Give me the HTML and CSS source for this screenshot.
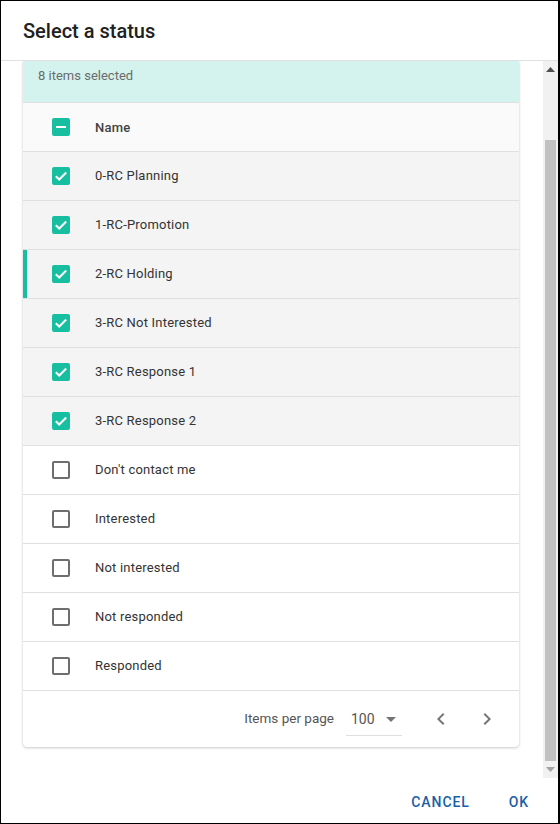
FILE: index.html
```html
<!DOCTYPE html>
<html>
<head>
<meta charset="utf-8">
<link rel="stylesheet" href="styles.css">
</head>
<body>
<div class="dialog">
  <div class="title">Select a status</div>
  <div class="content">
    <div class="scroll-area">
      <div class="card">
        <div class="banner">8 items selected</div>
        <div class="row head">
          <span class="cb on"><svg width="18" height="18" viewBox="0 0 18 18"><rect x="4" y="8" width="10" height="2" fill="#fff"/></svg></span>
          <span class="label">Name</span>
        </div>
        <div class="row sel"><span class="cb on"><svg width="18" height="18" viewBox="0 0 18 18"><path d="M3.8 9.2l3.4 3.3 7-7" fill="none" stroke="#fff" stroke-width="2"/></svg></span><span class="label">0-RC Planning</span></div>
        <div class="row sel"><span class="cb on"><svg width="18" height="18" viewBox="0 0 18 18"><path d="M3.8 9.2l3.4 3.3 7-7" fill="none" stroke="#fff" stroke-width="2"/></svg></span><span class="label">1-RC-Promotion</span></div>
        <div class="row sel active"><span class="cb on"><svg width="18" height="18" viewBox="0 0 18 18"><path d="M3.8 9.2l3.4 3.3 7-7" fill="none" stroke="#fff" stroke-width="2"/></svg></span><span class="label">2-RC Holding</span></div>
        <div class="row sel"><span class="cb on"><svg width="18" height="18" viewBox="0 0 18 18"><path d="M3.8 9.2l3.4 3.3 7-7" fill="none" stroke="#fff" stroke-width="2"/></svg></span><span class="label">3-RC Not Interested</span></div>
        <div class="row sel"><span class="cb on"><svg width="18" height="18" viewBox="0 0 18 18"><path d="M3.8 9.2l3.4 3.3 7-7" fill="none" stroke="#fff" stroke-width="2"/></svg></span><span class="label">3-RC Response 1</span></div>
        <div class="row sel"><span class="cb on"><svg width="18" height="18" viewBox="0 0 18 18"><path d="M3.8 9.2l3.4 3.3 7-7" fill="none" stroke="#fff" stroke-width="2"/></svg></span><span class="label">3-RC Response 2</span></div>
        <div class="row"><span class="cb off"></span><span class="label">Don't contact me</span></div>
        <div class="row"><span class="cb off"></span><span class="label">Interested</span></div>
        <div class="row"><span class="cb off"></span><span class="label">Not interested</span></div>
        <div class="row"><span class="cb off"></span><span class="label">Not responded</span></div>
        <div class="row"><span class="cb off"></span><span class="label">Responded</span></div>
        <div class="paginator">
          <span class="ipp">Items per page</span>
          <span class="select"><span class="val">100</span><svg width="10" height="5" viewBox="0 0 10 5"><path d="M0 0h10L5 5z" fill="#757575"/></svg></span>
          <span class="nav">
            <svg width="24" height="24" viewBox="0 0 24 24"><path d="M15.4 7.4L14 6l-6 6 6 6 1.4-1.4L10.8 12z" fill="#757575"/></svg>
            <svg width="24" height="24" viewBox="0 0 24 24"><path d="M8.6 16.6L10 18l6-6-6-6-1.4 1.4 4.6 4.6z" fill="#757575"/></svg>
          </span>
        </div>
      </div>
    </div>
    <div class="scrollbar">
      <div class="arrow up"><svg width="9" height="5" viewBox="0 0 9 5"><path d="M0 5h9L4.5 0z" fill="#505050"/></svg></div>
      <div class="track"><div class="thumb"></div></div>
      <div class="arrow down"><svg width="9" height="5" viewBox="0 0 9 5"><path d="M0 0h9L4.5 5z" fill="#a3a3a3"/></svg></div>
    </div>
  </div>
  <div class="footer">
    <span class="btn">CANCEL</span>
    <span class="btn">OK</span>
  </div>
</div>
</body>
</html>
```

FILE: styles.css
```css
html, body {
  margin: 0;
  padding: 0;
  background: #fff;
}
body {
  font-family: Roboto, "Liberation Sans", Arial, sans-serif;
}
.dialog {
  width: 560px;
  height: 824px;
  box-sizing: border-box;
  border: 1px solid #000;
  border-right-width: 2px;
  display: flex;
  flex-direction: column;
  background: #fff;
  overflow: hidden;
}
.title {
  flex: none;
  box-sizing: border-box;
  height: 60px;
  padding-left: 22px;
  padding-top: 1px;
  display: flex;
  align-items: center;
  font-size: 20px;
  font-weight: 500;
  color: #212121;
  border-bottom: 1px solid #e0e0e0;
}
.content {
  height: 717px;
  flex: none;
  display: flex;
}
.scroll-area {
  flex: 1;
  overflow: hidden;
  padding-left: 22px;
  padding-right: 24px;
}
.card {
  width: 496px;
  background: #fff;
  border-radius: 0 0 4px 4px;
  box-shadow: 0 1px 3px rgba(0,0,0,0.2), 0 0 1px rgba(0,0,0,0.12);
}
.banner {
  height: 42px;
  box-sizing: border-box;
  background: #d4f3ee;
  padding-left: 15px;
  display: flex;
  align-items: center;
  padding-bottom: 12px;
  font-size: 13px;
  color: #6b6b6b;
  border-bottom: 1px solid #e0e0e0;
}
.row {
  height: 49px;
  box-sizing: border-box;
  border-bottom: 1px solid #e0e0e0;
  display: flex;
  align-items: center;
  padding-left: 29px;
  font-size: 13px;
  color: #333;
  letter-spacing: 0.2px;
  background: #fff;
}
.row .label {
  padding-bottom: 2px;
}
.row.head .label {
  padding-bottom: 0;
}
.row.head {
  background: #fafafa;
  font-weight: 500;
  color: #424242;
}
.row.sel {
  background: #f4f4f4;
}
.row.active {
  box-shadow: inset 4px 0 0 #17bfa0;
}
.cb {
  width: 18px;
  height: 18px;
  box-sizing: border-box;
  border-radius: 2px;
  flex: none;
  display: flex;
}
.cb.on {
  background: #17bfa0;
}
.cb.off {
  border: 2px solid #6e6e6e;
}
.label {
  margin-left: 25px;
}
.paginator {
  height: 56px;
  display: flex;
  align-items: center;
  justify-content: flex-end;
  padding-right: 20px;
  font-size: 13px;
  color: #555;
}
.ipp {
  font-size: 13.5px;
  margin-right: 12px;
  padding-bottom: 2px;
}
.select {
  width: 56px;
  box-sizing: border-box;
  padding-left: 5px;
  height: 30px;
  display: flex;
  align-items: center;
  border-bottom: 1px solid #e0e0e0;
  margin-top: 4px;
  font-size: 14px;
  color: #555;
}
.select .val {
  width: 35px;
  padding-bottom: 4px;
}
.select svg {
  margin-bottom: 3px;
}
.nav {
  display: flex;
  gap: 22px;
  margin-left: 27px;
}
.scrollbar {
  width: 15px;
  flex: none;
  background: #f1f1f1;
  display: flex;
  flex-direction: column;
}
.arrow {
  height: 17px;
  flex: none;
  display: flex;
  align-items: center;
  justify-content: center;
}
.track {
  flex: 1;
  display: flex;
  flex-direction: column;
  justify-content: flex-end;
}
.thumb {
  height: 621px;
  margin: 0 2px 0 2px;
  background: #c1c1c1;
}
.footer {
  flex: 1;
  display: flex;
  align-items: center;
  justify-content: flex-end;
  padding-right: 29px;
  gap: 39px;
  padding-top: 2px;
}
.btn {
  font-size: 14px;
  font-weight: 500;
  color: #1a5fa8;
  letter-spacing: 0.9px;
}
```
